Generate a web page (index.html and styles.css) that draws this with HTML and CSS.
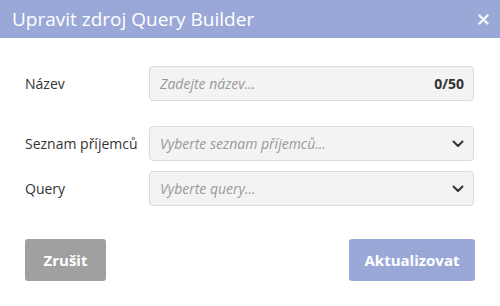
FILE: index.html
```html
<!DOCTYPE html>
<html lang="cs">
<head>
<meta charset="utf-8">
<link rel="stylesheet" href="styles.css">
</head>
<body>
<div class="modal">
  <div class="modal-header">
    <h1 class="title">Upravit zdroj Query Builder</h1>
    <svg class="close" width="11" height="11" viewBox="0 0 11 11"><path d="M1.5 1.5 L9.5 9.5 M9.5 1.5 L1.5 9.5" stroke="#fff" stroke-width="2.4" stroke-linecap="round" opacity="0.9"/></svg>
  </div>
  <div class="modal-body">
    <div class="row row-name">
      <label class="label">Název</label>
      <div class="field">
        <span class="placeholder">Zadejte název...</span>
        <span class="counter">0/50</span>
      </div>
    </div>
    <div class="row row-list">
      <label class="label">Seznam příjemců</label>
      <div class="field">
        <span class="placeholder">Vyberte seznam příjemců...</span>
        <svg class="chevron" width="12" height="8" viewBox="0 0 12 8"><path d="M1.5 1.5 L6 6 L10.5 1.5" fill="none" stroke="#333" stroke-width="2" stroke-linecap="round" stroke-linejoin="round"/></svg>
      </div>
    </div>
    <div class="row row-query">
      <label class="label">Query</label>
      <div class="field">
        <span class="placeholder">Vyberte query...</span>
        <svg class="chevron" width="12" height="8" viewBox="0 0 12 8"><path d="M1.5 1.5 L6 6 L10.5 1.5" fill="none" stroke="#333" stroke-width="2" stroke-linecap="round" stroke-linejoin="round"/></svg>
      </div>
    </div>
  </div>
  <div class="modal-footer">
    <button class="btn btn-cancel">Zrušit</button>
    <button class="btn btn-primary">Aktualizovat</button>
  </div>
</div>
</body>
</html>
```
FILE: styles.css
```css
html, body {
  margin: 0;
  padding: 0;
  background: #fff;
}
body {
  font-family: "Open Sans", "Liberation Sans", sans-serif;
  color: #333;
  width: 500px;
  height: 306px;
  overflow: hidden;
}
.modal {
  display: flex;
  flex-direction: column;
}
.modal-header {
  height: 38px;
  background: #9aa8d8;
  display: flex;
  align-items: center;
  justify-content: space-between;
  padding: 0 11px 0 12px;
}
.title {
  margin: 0;
  font-size: 19px;
  font-weight: 400;
  color: #fff;
  line-height: 24px;
}
.close {
  display: block;
}
.modal-body {
  padding: 28px 26px 0 25px;
  display: flex;
  flex-direction: column;
}
.row {
  display: flex;
  align-items: center;
}
.row-list {
  margin-top: 25px;
}
.row-query {
  margin-top: 10px;
}
.label {
  width: 124px;
  flex: none;
  font-size: 14px;
}
.field {
  flex: 1;
  height: 33px;
  border: 1px solid #dcdcdc;
  border-radius: 4px;
  background: #f3f3f3;
  display: flex;
  align-items: center;
  justify-content: space-between;
  padding: 0 9px 0 10px;
}
.placeholder {
  font-style: italic;
  font-size: 14px;
  color: #999;
}
.counter {
  font-weight: 700;
  font-size: 14px;
  color: #333;
}
.chevron {
  display: block;
}
.modal-footer {
  padding: 33px 25px 0 25px;
  display: flex;
  justify-content: space-between;
}
.btn {
  height: 42px;
  border: none;
  border-radius: 3px;
  font-family: "Open Sans", "Liberation Sans", sans-serif;
  font-size: 15px;
  font-weight: 700;
  color: #fff;
  padding: 0;
}
.btn-cancel {
  width: 81px;
  background: #a0a0a0;
}
.btn-primary {
  width: 126px;
  background: #9aa8d8;
}
```
